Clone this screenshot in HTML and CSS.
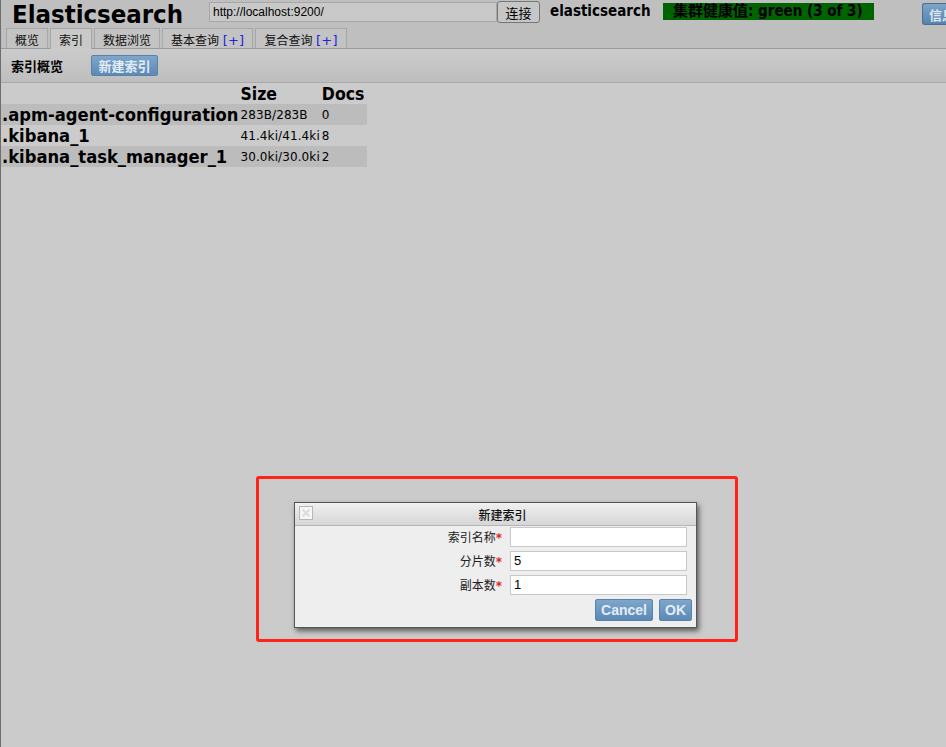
FILE: index.html
```html
<!DOCTYPE html>
<html>
<head>
<meta charset="utf-8">
<link rel="stylesheet" href="styles.css">
</head>
<body>
<div class="page">
  <header class="header">
    <h1 class="logo">Elasticsearch</h1>
    <input class="url" type="text" value="http://localhost:9200/">
    <button class="connect">连接</button>
    <span class="cluster">elasticsearch</span>
    <span class="health">集群健康值: green (3 of 3)</span>
    <span class="spacer"></span>
    <button class="info">信息</button>
  </header>
  <nav class="tabs">
    <span class="tab">概览</span>
    <span class="tab active">索引</span>
    <span class="tab">数据浏览</span>
    <span class="tab">基本查询 <em>[+]</em></span>
    <span class="tab">复合查询 <em>[+]</em></span>
  </nav>
  <div class="toolbar">
    <span class="toolbar-title">索引概览</span>
    <button class="btn-blue">新建索引</button>
  </div>
  <table class="indices">
    <thead>
      <tr><th></th><th>Size</th><th>Docs</th></tr>
    </thead>
    <tbody>
      <tr class="odd"><td class="name">.apm-agent-configuration</td><td class="num">283B/283B</td><td class="num">0</td></tr>
      <tr><td class="name">.kibana_1</td><td class="num">41.4ki/41.4ki</td><td class="num">8</td></tr>
      <tr class="odd"><td class="name">.kibana_task_manager_1</td><td class="num">30.0ki/30.0ki</td><td class="num">2</td></tr>
    </tbody>
  </table>
</div>

<div class="highlight"></div>

<div class="dialog">
  <div class="dialog-title">
    <span class="close"></span>
    <span class="dialog-caption">新建索引</span>
  </div>
  <div class="dialog-body">
    <div class="field"><label>索引名称<b>*</b></label><input type="text" value=""></div>
    <div class="field"><label>分片数<b>*</b></label><input type="text" value="5"></div>
    <div class="field"><label>副本数<b>*</b></label><input type="text" value="1"></div>
    <div class="actions">
      <button class="btn-blue dlg-btn">Cancel</button>
      <button class="btn-blue dlg-btn">OK</button>
    </div>
  </div>
</div>
</body>
</html>
```

FILE: styles.css
```css
* { box-sizing: border-box; }
html, body { margin: 0; padding: 0; height: 100%; }
body {
  background: #cbcbcb;
  border-left: 1px solid #6e6e6e;
  font-family: "DejaVu Sans", "Noto Sans CJK SC", sans-serif;
  color: #000;
  overflow: hidden;
}
.page { width: 100%; }

.header {
  display: flex;
  align-items: flex-start;
  height: 28px;
  background: #bfbfbf;
  padding-left: 11px;
}
.logo {
  margin: -1px 0 0 0;
  font-family: "DejaVu Sans Condensed", "DejaVu Sans", sans-serif;
  font-weight: bold;
  font-size: 25.5px;
  line-height: 30px;
  width: 197px;
  flex: none;
  color: #000;
}
.url {
  width: 288px;
  height: 20px;
  margin: 2px 0 0 0;
  padding: 0 3px;
  border: 1px solid #a8a8a8;
  background: #c9c9c9;
  font-family: "Liberation Sans", sans-serif;
  font-size: 12px;
  color: #000;
}
.connect {
  width: 43px;
  height: 22px;
  margin: 1px 0 0 0;
  border: 1px solid #777;
  border-radius: 3px;
  background: #c6c6c6;
  font-family: "Noto Sans CJK SC", sans-serif;
  font-size: 13px;
  padding: 0;
  color: #000;
}
.cluster {
  margin: 2px 0 0 10px;
  font-family: "DejaVu Sans Condensed", "DejaVu Sans", sans-serif;
  font-weight: bold;
  font-size: 15px;
  line-height: 18px;
  width: 113px;
}
.health {
  background: #006400;
  height: 17px;
  width: 211px;
  margin-top: 3px;
  padding-left: 10px;
  font-family: "DejaVu Sans Condensed", "Noto Sans CJK SC", sans-serif;
  font-weight: bold;
  font-size: 15px;
  line-height: 17px;
  white-space: nowrap;
  overflow: hidden;
}
.spacer { flex: 1; }
.info {
  width: 25px;
  height: 22px;
  margin: 3px -1px 0 0;
  padding: 0 0 0 6px;
  border: 1px solid #4d6f92;
  border-right: none;
  border-radius: 3px 0 0 3px;
  background: linear-gradient(#7ea4c8, #5683ad);
  color: #dfe7ef;
  font-family: "Noto Sans CJK SC", sans-serif;
  font-weight: bold;
  font-size: 13px;
  text-align: left;
  overflow: hidden;
  white-space: nowrap;
}

.tabs {
  display: flex;
  gap: 2px;
  height: 21px;
  padding: 0 0 0 5px;
  background: #bfbfbf;
  border-bottom: 1px solid #9a9a9a;
  align-items: flex-end;
}
.tab {
  height: 20px;
  padding: 0 8px;
  border: 1px solid #a7a7a7;
  border-bottom: none;
  background: #c3c3c3;
  font-family: "Noto Sans CJK SC", sans-serif;
  font-size: 12px;
  line-height: 21px;
  color: #111;
}
.tab.active {
  background: #c9c9c9;
  height: 21px;
  margin-bottom: -1px;
}
.tab em {
  font-style: normal;
  color: #2222dd;
  font-family: "DejaVu Sans", sans-serif;
  font-size: 13px;
  letter-spacing: 0.2px;
  margin-left: 1px;
}

.toolbar {
  display: flex;
  align-items: center;
  height: 34px;
  padding-left: 10px;
  background: linear-gradient(#cbcbcb, #bebebe);
  border-bottom: 1px solid #a9a9a9;
}
.toolbar-title {
  font-family: "Noto Sans CJK SC", sans-serif;
  font-weight: bold;
  font-size: 13px;
  width: 80px;
}
.btn-blue {
  border: 1px solid #5a81a8;
  border-radius: 2px;
  background: linear-gradient(#7fa6cb, #5a8ab6);
  color: #e4edf5;
  font-family: "Noto Sans CJK SC", sans-serif;
  font-weight: bold;
  font-size: 13px;
  padding: 0;
}
.toolbar .btn-blue { width: 67px; height: 21px; }

.indices {
  border-collapse: collapse;
  margin: 0;
}
.indices th {
  font-family: "DejaVu Sans Condensed", "DejaVu Sans", sans-serif;
  font-size: 17.5px;
  font-weight: bold;
  text-align: left;
  padding: 2px 1px 0;
  height: 21px;
  line-height: 19px;
  vertical-align: bottom;
}
.indices td { padding: 0 1px; height: 21px; vertical-align: middle; }
.indices tr.odd td { background: #bcbcbc; }
.indices .name {
  font-family: "DejaVu Sans Condensed", "DejaVu Sans", sans-serif;
  font-weight: bold;
  font-size: 18.2px;
  white-space: nowrap;
}
.indices .num {
  font-family: "DejaVu Sans", sans-serif;
  font-size: 12px;
  letter-spacing: 0.1px;
  white-space: nowrap;
}
.indices td:nth-child(3) { width: 46px; }

.highlight {
  position: absolute;
  left: 256px;
  top: 476px;
  width: 482px;
  height: 166px;
  border: 3px solid #ff2318;
  border-radius: 3px;
}

.dialog {
  position: absolute;
  left: 294px;
  top: 502px;
  width: 403px;
  height: 126px;
  border: 1px solid #555;
  background: #eeeeee;
  box-shadow: 2px 3px 5px rgba(0,0,0,0.55);
}
.dialog-title {
  position: relative;
  height: 23px;
  background: linear-gradient(#f0f0f0, #d6d6d6);
  border-bottom: 1px solid #b5b5b5;
  display: flex;
  align-items: center;
  justify-content: center;
  padding-left: 14px;
}
.close {
  position: absolute;
  left: 4px;
  top: 3px;
  width: 14px;
  height: 14px;
  border: 1px solid #b7b7b7;
  background: #f6f6f6;
}
.close::before, .close::after {
  content: "";
  position: absolute;
  left: 1px;
  top: 5px;
  width: 10px;
  height: 2px;
  background: #dcdcdc;
  transform: rotate(45deg);
}
.close::after { transform: rotate(-45deg); }
.dialog-caption {
  font-family: "Noto Sans CJK SC", sans-serif;
  font-size: 12px;
  font-weight: 500;
  color: #111;
}
.dialog-body {
  padding: 1px 9px 0 0;
  display: flex;
  flex-direction: column;
  gap: 5px;
}
.field {
  display: flex;
  justify-content: flex-end;
  align-items: center;
  height: 19px;
}
.field label {
  font-family: "Noto Sans CJK SC", sans-serif;
  font-size: 12px;
  color: #222;
  margin-right: 8px;
}
.field label b {
  color: #dd2222;
  font-weight: bold;
  font-family: "DejaVu Sans", sans-serif;
  font-size: 12px;
}
.field input {
  width: 177px;
  height: 20px;
  border: 1px solid #c8c8c8;
  background: #fff;
  padding: 0 3px;
  font-family: "Liberation Sans", sans-serif;
  font-size: 13px;
  margin: 0;
}
.actions {
  display: flex;
  justify-content: flex-end;
  gap: 6px;
  margin-top: 0;
  margin-right: -5px;
}
.dlg-btn {
  height: 22px;
  padding: 0 5px;
  font-family: "Liberation Sans", sans-serif;
  font-size: 14px;
}
```
